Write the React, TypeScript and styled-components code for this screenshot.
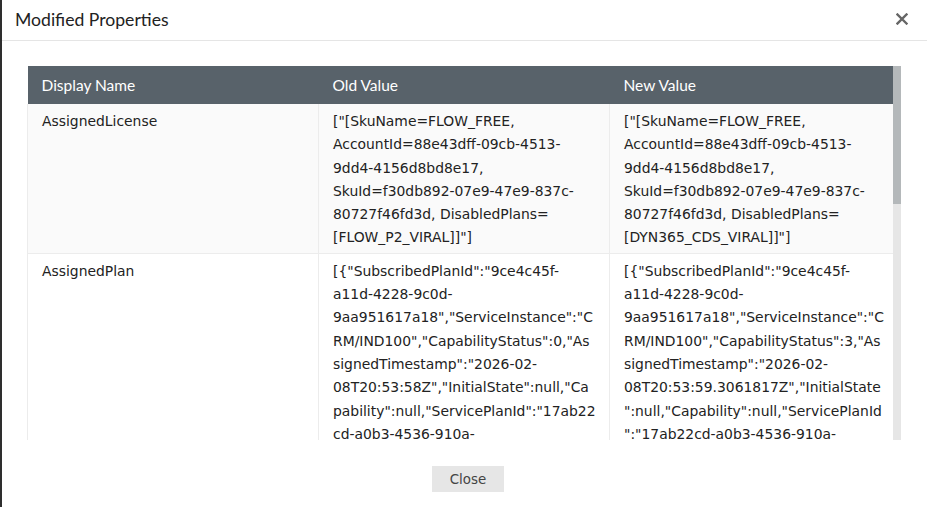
import styled, { createGlobalStyle } from 'styled-components';

const GlobalStyle = createGlobalStyle`
  html, body {
    margin: 0;
    padding: 0;
    background: #ffffff;
  }
  * {
    box-sizing: border-box;
  }
`;

const Page = styled.div`
  width: 927px;
  height: 517px;
  display: flex;
  background: #ffffff;
  overflow: hidden;
`;

const Backdrop = styled.div`
  width: 2px;
  height: 507px;
  background: #2e2e2e;
  flex-shrink: 0;
`;

const Dialog = styled.div`
  flex: 1;
  display: flex;
  flex-direction: column;
  background: #ffffff;
`;

const Header = styled.div`
  height: 41px;
  display: flex;
  align-items: center;
  justify-content: space-between;
  padding: 0 18px 0 13px;
  border-bottom: 1px solid #e5e5e5;
`;

const Title = styled.h2`
  margin: 0;
  font-family: Lato, 'Noto Sans', sans-serif;
  font-size: 17.6px;
  font-weight: 400;
  color: #222222;
  padding-bottom: 2px;
`;

const CloseIcon = styled.button`
  border: none;
  background: none;
  padding: 0;
  width: 14px;
  height: 14px;
  display: flex;
  align-items: center;
  justify-content: center;
  cursor: pointer;
  margin-bottom: 2px;
`;

const Body = styled.div`
  display: flex;
  padding: 25px 26px 0 25px;
`;

const Viewport = styled.div`
  width: 866px;
  height: 374px;
  overflow: hidden;
`;

const ScrollTrack = styled.div`
  width: 8px;
  height: 374px;
  background: #e6e6e6;
  display: flex;
  flex-direction: column;
`;

const ScrollThumb = styled.div`
  height: 138px;
  background: #b4b8ba;
`;

const Table = styled.table`
  width: 866px;
  border-collapse: collapse;
  table-layout: fixed;
`;

const HeadCell = styled.th<{ width: number }>`
  width: ${({ width }) => width}px;
  height: 38px;
  padding: 0 14px;
  background: #58626a;
  color: #ffffff;
  font-family: Lato, 'Noto Sans', sans-serif;
  font-size: 15.5px;
  font-weight: 400;
  text-align: left;
`;

const Row = styled.tr<{ shaded: boolean }>`
  background: ${({ shaded }) => (shaded ? '#fafafa' : '#ffffff')};
`;

const Cell = styled.td`
  vertical-align: top;
  padding: 6px 14px 3px;
  border: 1px solid #ececec;
  border-top: none;
  font-family: 'DejaVu Sans', Verdana, sans-serif;
  font-size: 13.9px;
  line-height: 23.3px;
  color: #222222;
`;

const Line = styled.div`
  white-space: nowrap;
`;

const Footer = styled.div`
  display: flex;
  justify-content: center;
  padding: 26px 0 0 7px;
`;

const CloseButton = styled.button`
  width: 72px;
  height: 26px;
  border: none;
  background: #e6e6e6;
  color: #444444;
  font-family: 'DejaVu Sans', Verdana, sans-serif;
  font-size: 13.4px;
  cursor: pointer;
`;

type Prop = {
  name: string;
  oldValue: string[];
  newValue: string[];
};

const rows: Prop[] = [
  {
    name: 'AssignedLicense',
    oldValue: [
      '["[SkuName=FLOW_FREE,',
      'AccountId=88e43dff-09cb-4513-',
      '9dd4-4156d8bd8e17,',
      'SkuId=f30db892-07e9-47e9-837c-',
      '80727f46fd3d, DisabledPlans=',
      '[FLOW_P2_VIRAL]]"]',
    ],
    newValue: [
      '["[SkuName=FLOW_FREE,',
      'AccountId=88e43dff-09cb-4513-',
      '9dd4-4156d8bd8e17,',
      'SkuId=f30db892-07e9-47e9-837c-',
      '80727f46fd3d, DisabledPlans=',
      '[DYN365_CDS_VIRAL]]"]',
    ],
  },
  {
    name: 'AssignedPlan',
    oldValue: [
      '[{"SubscribedPlanId":"9ce4c45f-',
      'a11d-4228-9c0d-',
      '9aa951617a18","ServiceInstance":"C',
      'RM/IND100","CapabilityStatus":0,"As',
      'signedTimestamp":"2026-02-',
      '08T20:53:58Z","InitialState":null,"Ca',
      'pability":null,"ServicePlanId":"17ab22',
      'cd-a0b3-4536-910a-',
      '84b6b2a4e1c7"},',
      '{"SubscribedPlanId":"9ce4c45f-',
      'a11d-4228-9c0d-',
      '9aa951617a18","ServiceInstance":"P',
      'owerAppsService/IND","CapabilitySt',
      'atus":0,"AssignedTimestamp":"2026-',
      '02-08T20:53:58Z","InitialState":nul',
      'l,"Capability":null,"ServicePlanId":"',
      'a2729df7-25f8-4e63-984b-',
      '8a8484121554"}]',
    ],
    newValue: [
      '[{"SubscribedPlanId":"9ce4c45f-',
      'a11d-4228-9c0d-',
      '9aa951617a18","ServiceInstance":"C',
      'RM/IND100","CapabilityStatus":3,"As',
      'signedTimestamp":"2026-02-',
      '08T20:53:59.3061817Z","InitialState',
      '":null,"Capability":null,"ServicePlanId',
      '":"17ab22cd-a0b3-4536-910a-',
      '84b6b2a4e1c7"},',
      '{"SubscribedPlanId":"9ce4c45f-',
      'a11d-4228-9c0d-',
      '9aa951617a18","ServiceInstance":"P',
      'owerAppsService/IND","CapabilitySt',
      'atus":3,"AssignedTimestamp":"2026-',
      '02-08T20:53:59.3061817Z","InitialSt',
      'ate":null,"Capability":null,"Service',
      'PlanId":"a2729df7-25f8-4e63-984b-',
      '8a8484121554"}]',
    ],
  },
];

const Lines = ({ lines }: { lines: string[] }) => (
  <>
    {lines.map((line, i) => (
      <Line key={i}>{line}</Line>
    ))}
  </>
);

const App = () => {
  return (
    <>
      <GlobalStyle />
      <Page>
        <Backdrop />
        <Dialog>
          <Header>
            <Title>Modified Properties</Title>
            <CloseIcon aria-label="Close">
              <svg width="12" height="12" viewBox="0 0 12 12">
                <path
                  d="M1.5 1.5 L10.5 10.5 M10.5 1.5 L1.5 10.5"
                  stroke="#666666"
                  strokeWidth="2.4"
                  strokeLinecap="square"
                />
              </svg>
            </CloseIcon>
          </Header>
          <Body>
            <Viewport>
              <Table>
                <thead>
                  <tr>
                    <HeadCell width={291}>Display Name</HeadCell>
                    <HeadCell width={291}>Old Value</HeadCell>
                    <HeadCell width={284}>New Value</HeadCell>
                  </tr>
                </thead>
                <tbody>
                  {rows.map((row, i) => (
                    <Row key={row.name} shaded={i % 2 === 0}>
                      <Cell>{row.name}</Cell>
                      <Cell>
                        <Lines lines={row.oldValue} />
                      </Cell>
                      <Cell>
                        <Lines lines={row.newValue} />
                      </Cell>
                    </Row>
                  ))}
                </tbody>
              </Table>
            </Viewport>
            <ScrollTrack>
              <ScrollThumb />
            </ScrollTrack>
          </Body>
          <Footer>
            <CloseButton>Close</CloseButton>
          </Footer>
        </Dialog>
      </Page>
    </>
  );
};

export default App;
